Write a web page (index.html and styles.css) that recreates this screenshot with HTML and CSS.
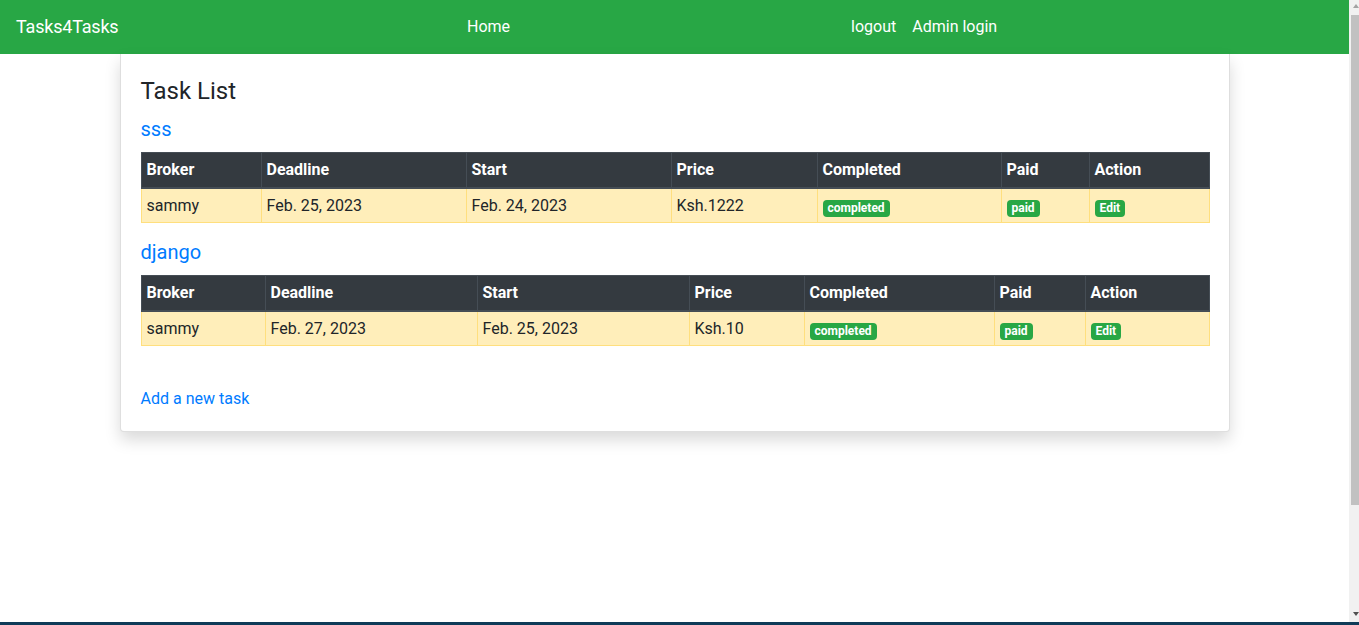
FILE: index.html
```html
<!DOCTYPE html>
<html lang="en">
<head>
<meta charset="utf-8">
<title>Tasks4Tasks</title>
<link rel="stylesheet" href="styles.css">
</head>
<body>
<div class="screen">
  <div class="viewport">
    <div class="page">
      <nav class="navbar">
        <a class="brand" href="#">Tasks4Tasks</a>
        <ul class="nav nav-main">
          <li><a class="nav-link" href="#">Home</a></li>
        </ul>
        <ul class="nav nav-user">
          <li><a class="nav-link" href="#">logout</a></li>
          <li><a class="nav-link" href="#">Admin login</a></li>
        </ul>
      </nav>
      <main class="container">
        <div class="card">
          <h4 class="title">Task List</h4>

          <h5 class="task-name"><a href="#">sss</a></h5>
          <table class="tasks tasks-a">
            <colgroup>
              <col class="c1"><col class="c2"><col class="c3"><col class="c4"><col class="c5"><col class="c6"><col class="c7">
            </colgroup>
            <thead>
              <tr><th>Broker</th><th>Deadline</th><th>Start</th><th>Price</th><th>Completed</th><th>Paid</th><th>Action</th></tr>
            </thead>
            <tbody>
              <tr>
                <td>sammy</td><td>Feb. 25, 2023</td><td>Feb. 24, 2023</td><td>Ksh.1222</td>
                <td><span class="badge">completed</span></td>
                <td><span class="badge">paid</span></td>
                <td><a class="badge" href="#">Edit</a></td>
              </tr>
            </tbody>
          </table>

          <h5 class="task-name"><a href="#">django</a></h5>
          <table class="tasks tasks-b">
            <colgroup>
              <col class="c1"><col class="c2"><col class="c3"><col class="c4"><col class="c5"><col class="c6"><col class="c7">
            </colgroup>
            <thead>
              <tr><th>Broker</th><th>Deadline</th><th>Start</th><th>Price</th><th>Completed</th><th>Paid</th><th>Action</th></tr>
            </thead>
            <tbody>
              <tr>
                <td>sammy</td><td>Feb. 27, 2023</td><td>Feb. 25, 2023</td><td>Ksh.10</td>
                <td><span class="badge">completed</span></td>
                <td><span class="badge">paid</span></td>
                <td><a class="badge" href="#">Edit</a></td>
              </tr>
            </tbody>
          </table>

          <p class="add"><a href="#">Add a new task</a></p>
        </div>
      </main>
    </div>
    <div class="scrollbar">
      <span class="arrow arrow-up"></span>
      <div class="thumb"></div>
      <div class="track"></div>
      <span class="arrow arrow-down"></span>
    </div>
  </div>
  <div class="taskbar"></div>
</div>
</body>
</html>
```

FILE: styles.css
```css
* { box-sizing: border-box; }

html, body {
  margin: 0;
  padding: 0;
  height: 100%;
  overflow: hidden;
}

body {
  font-family: Roboto, "Liberation Sans", sans-serif;
  font-size: 16px;
  line-height: 1.5;
  color: #212529;
  background: #fff;
}

a { color: #007bff; text-decoration: none; }

.screen {
  display: flex;
  flex-direction: column;
  height: 100vh;
}

.viewport {
  flex: 1;
  display: flex;
  min-height: 0;
}

.page {
  flex: 1;
  min-width: 0;
}

/* navbar */
.navbar {
  height: 54px;
  background: #28a745;
  display: flex;
  align-items: center;
  padding: 0 16px;
}

.brand {
  color: #fff;
  font-size: 18px;
  letter-spacing: -0.2px;
  line-height: 30px;
  width: 443px;
  flex: 0 0 443px;
  margin-top: -1px;
}

.nav {
  list-style: none;
  margin: 0;
  padding: 0;
  display: flex;
}

.nav-user { margin-left: 325px; }

.nav-link {
  display: block;
  color: #fff;
  padding: 0 8px;
  line-height: 24px;
}

/* content */
.container {
  width: 1140px;
  margin: 0 auto;
  padding: 0 15px;
}

.card {
  background: #fff;
  border: 1px solid rgba(0, 0, 0, 0.125);
  border-top: 0;
  border-radius: 0 0 4px 4px;
  box-shadow: 0 8px 16px rgba(0, 0, 0, 0.15);
  padding: 23px 20px 20px;
}

.title {
  font-size: 24px;
  font-weight: 400;
  line-height: 28.8px;
  margin: 0 0 11px;
}

.task-name {
  font-size: 20px;
  font-weight: 400;
  line-height: 24px;
  margin: 0 0 11px;
}

.tasks {
  width: 100%;
  table-layout: fixed;
  border-collapse: collapse;
  margin-bottom: 17px;
}

.tasks th,
.tasks td {
  padding: 5px 5px 4px;
  text-align: left;
  vertical-align: top;
  line-height: 24px;
  white-space: nowrap;
}

.tasks th {
  padding: 5px;
  background: #343a40;
  color: #fff;
  font-weight: 700;
  border: 1px solid #454d55;
  border-bottom-width: 2px;
}

.tasks td {
  background: #ffeeba;
  border: 1px solid #ffdf7e;
}

.tasks-a .c1 { width: 120px; }
.tasks-a .c2 { width: 205px; }
.tasks-a .c3 { width: 205px; }
.tasks-a .c4 { width: 146px; }
.tasks-a .c5 { width: 184px; }
.tasks-a .c6 { width: 88px; }
.tasks-a .c7 { width: 120px; }

.tasks-b .c1 { width: 124px; }
.tasks-b .c2 { width: 212px; }
.tasks-b .c3 { width: 212px; }
.tasks-b .c4 { width: 115px; }
.tasks-b .c5 { width: 190px; }
.tasks-b .c6 { width: 91px; }
.tasks-b .c7 { width: 124px; }

.badge {
  display: inline-block;
  background: #28a745;
  color: #fff;
  font-size: 12px;
  font-weight: 700;
  height: 17px;
  line-height: 17px;
  padding: 0 5px;
  border-radius: 4px;
  vertical-align: top;
  margin-top: 6px;
}

.add {
  margin: 41px 0 0;
  line-height: 24px;
}

/* fake scrollbar */
.scrollbar {
  width: 10px;
  flex: 0 0 10px;
  background: #f1f1f1;
  display: flex;
  flex-direction: column;
  align-items: center;
  padding: 4px 0;
}

.arrow {
  width: 0;
  height: 0;
  border-left: 3px solid transparent;
  border-right: 3px solid transparent;
  margin-left: 3px;
}

.arrow-up { border-bottom: 4px solid #a3a3a3; }
.arrow-down { border-top: 4px solid #505050; margin-bottom: 2px; }

.thumb {
  width: 8px;
  margin-left: 2px;
  height: 490px;
  margin-top: 7px;
  background: #c1c1c1;
}

.track { flex: 1; }

.taskbar {
  height: 3px;
  background: #0f3b58;
}
```
